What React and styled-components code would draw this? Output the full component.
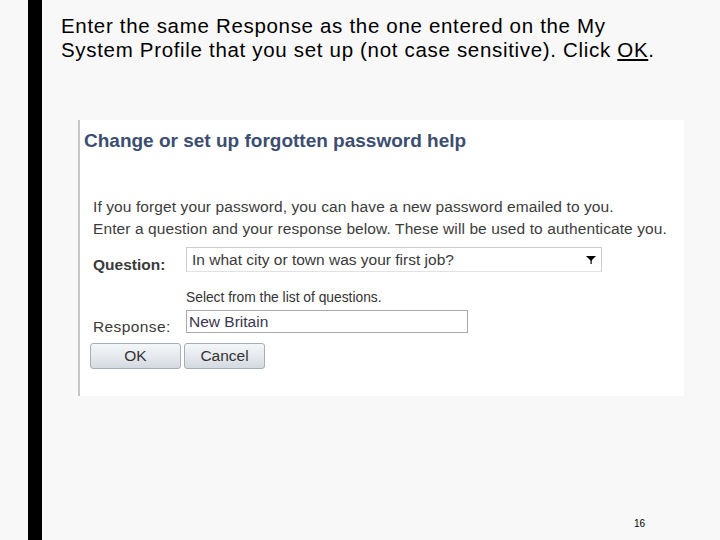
import React from "react";
import styled, { createGlobalStyle } from "styled-components";

const Global = createGlobalStyle`
  html, body { margin: 0; padding: 0; background: #f8f8f8; }
  body { font-family: "Liberation Sans", Arial, sans-serif; }
`;

const Slide = styled.div`
  display: flex;
  width: 720px;
  height: 540px;
  background: #f8f8f8;
  overflow: hidden;
`;

const SideBar = styled.div`
  width: 14px;
  margin-left: 28px;
  background: #000;
  flex-shrink: 0;
`;

const Main = styled.div`
  flex: 1;
  display: flex;
  flex-direction: column;
`;

const Instruction = styled.p`
  margin: 14px 0 0 19px;
  font-size: 20.5px;
  line-height: 24px;
  color: #000;
  letter-spacing: 0.68px;
  white-space: nowrap;
`;

const Underlined = styled.span`
  text-decoration: underline;
  text-underline-offset: 2px;
`;

const Panel = styled.div`
  margin: 58px 0 0 36px;
  width: 606px;
  height: 276px;
  background: #fff;
  border-left: 2px solid #c6c6c6;
  box-sizing: border-box;
  font-family: "Liberation Sans", Arial, sans-serif;
  color: #3a3a3a;
`;

const Title = styled.h2`
  margin: 0;
  padding: 10px 0 0 4px;
  font-size: 19px;
  line-height: 22px;
  font-weight: bold;
  color: #3b4d70;
`;

const Form = styled.div`
  padding: 44px 0 0 13px;
  display: flex;
  flex-direction: column;
`;

const Intro = styled.p`
  margin: 0;
  font-size: 15.5px;
  line-height: 22px;
  letter-spacing: 0.1px;
  color: #3c3c3c;
`;

const Row = styled.div`
  display: grid;
  grid-template-columns: 93px auto;
  align-items: end;
  margin-top: ${(p) => p.$mt || 0}px;
`;

const Label = styled.span`
  font-size: 15.5px;
  line-height: 18px;
  letter-spacing: ${(p) => (p.$bold ? "0" : "0.4px")};
  font-weight: ${(p) => (p.$bold ? "bold" : "normal")};
  color: #3a3a3a;
  margin-bottom: ${(p) => p.$mb || 0}px;
`;

const Select = styled.div`
  width: 416px;
  height: 25px;
  box-sizing: border-box;
  border: 1px solid #cdcdcd;
  border-bottom-color: #e2e2e2;
  display: flex;
  align-items: center;
  justify-content: space-between;
  padding: 0 5px 0 5px;
  font-size: 15.5px;
  color: #3a3a3a;
  background: #fff;
`;

const Hint = styled.div`
  grid-column: 2;
  font-size: 13.8px;
  line-height: 16px;
  color: #333;
`;

const Input = styled.div`
  width: 282px;
  height: 23px;
  box-sizing: border-box;
  border: 1px solid #a9a9a9;
  display: flex;
  align-items: center;
  padding-left: 2px;
  font-size: 15.5px;
  color: #3a3550;
  background: #fff;
`;

const Buttons = styled.div`
  display: flex;
  gap: 3px;
  margin: 10px 0 0 -3px;
`;

const Button = styled.button`
  width: ${(p) => p.$w}px;
  height: 26px;
  border: 1px solid #a8aeb6;
  border-radius: 3px;
  background: linear-gradient(#f4f6f8 0%, #e6eaee 50%, #d3d9e0 100%);
  font-family: "Liberation Sans", Arial, sans-serif;
  font-size: 15.5px;
  color: #333;
  padding: 0;
`;

const Footer = styled.div`
  margin-top: auto;
  display: flex;
  justify-content: flex-end;
  padding: 0 75px 11px 0;
  font-size: 10px;
  color: #000;
`;

function DropArrow() {
  return (
    <svg width="10" height="8" viewBox="0 0 10 8">
      <polygon points="0,0 10,0 5,5" fill="#000" />
      <rect x="4.5" y="4" width="1.2" height="4" fill="#000" />
    </svg>
  );
}

export default function App() {
  return (
    <>
      <Global />
      <Slide>
        <SideBar />
        <Main>
          <Instruction>
            Enter the same Response as the one entered on the My
            <br />
            System Profile that you set up (not case sensitive). Click{" "}
            <Underlined>OK</Underlined>.
          </Instruction>
          <Panel>
            <Title>Change or set up forgotten password help</Title>
            <Form>
              <Intro>If you forget your password, you can have a new password emailed to you.</Intro>
              <Intro>Enter a question and your response below. These will be used to authenticate you.</Intro>
              <Row $mt={7}>
                <Label $bold $mb={-2}>Question:</Label>
                <Select>
                  <span>In what city or town was your first job?</span>
                  <DropArrow />
                </Select>
              </Row>
              <Row $mt={18}>
                <Hint>Select from the list of questions.</Hint>
              </Row>
              <Row $mt={4}>
                <Label $mb={-3}>Response:</Label>
                <Input>New Britain</Input>
              </Row>
              <Buttons>
                <Button $w={91}>OK</Button>
                <Button $w={81}>Cancel</Button>
              </Buttons>
            </Form>
          </Panel>
          <Footer>16</Footer>
        </Main>
      </Slide>
    </>
  );
}
